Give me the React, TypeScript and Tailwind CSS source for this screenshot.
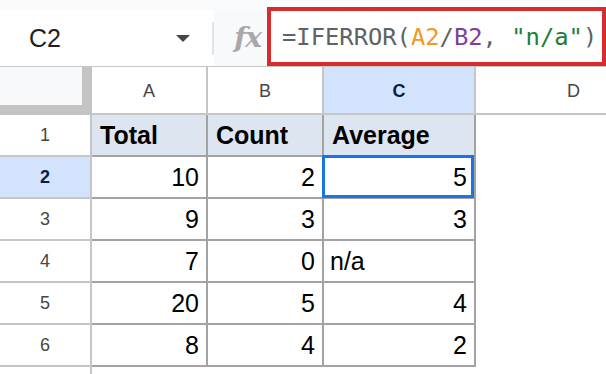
import React from "react";

const cols = ["A", "B", "C", "D"];
const widths = ["w-[116px]", "w-[116px]", "w-[152px]", "flex-1"];

const rows: { a: string; b: string; c: string; cLeft?: boolean }[] = [
  { a: "10", b: "2", c: "5" },
  { a: "9", b: "3", c: "3" },
  { a: "7", b: "0", c: "n/a", cLeft: true },
  { a: "20", b: "5", c: "4" },
  { a: "8", b: "4", c: "2" },
];

function FxIcon() {
  return (
    <span className="font-['DejaVu_Serif'] italic font-bold text-[28px] leading-none text-[#a8a8a8] tracking-[-1px]">
      fx
    </span>
  );
}

export default function App() {
  return (
    <div className="w-[606px] h-[374px] overflow-hidden bg-white font-['Liberation_Sans',Arial,sans-serif] text-black">
      <div className="h-[10px] bg-[#f9fbfd]" />
      {/* toolbar: name box + formula bar */}
      <div className="flex h-[56px]">
        <div className="w-[212px] flex items-center justify-between pl-[29px] pr-[22px]">
          <span className="text-[25px] leading-none text-[#1f1f1f]">C2</span>
          <span className="w-0 h-0 border-l-[7px] border-r-[7px] border-t-[7px] border-l-transparent border-r-transparent border-t-[#444746]" />
        </div>
        <div className="w-[2px] h-[33px] self-center bg-[#dbe4ef]" />
        <div className="w-[53px] bg-[#f8f9fa] flex items-center justify-center pl-[14px]">
          <FxIcon />
        </div>
        <div className="flex-1 relative flex items-center pl-[15px] bg-white">
          <span className="font-['DejaVu_Sans_Mono','Liberation_Mono',monospace] text-[23.8px] leading-none whitespace-pre text-[#5f6368]">
            =IFERROR(<span className="text-[#f09a26]">A2</span>/
            <span className="text-[#7b3f9e]">B2</span>,{" "}
            <span className="text-[#188038]">"n/a"</span>)
          </span>
          <div className="absolute -top-[3px] left-0 right-0 bottom-0 border-[4px] border-[#d92b2b]" />
        </div>
      </div>
      <div className="h-px bg-[#c4c7c5]" />

      {/* column headers */}
      <div className="flex h-[48px]">
        <div className="w-[92px] bg-[#f8f9fa] border-r-[10px] border-b-[10px] border-[#c4c4c4]" />
        {cols.map((c, i) => (
          <div
            key={c}
            className={`${widths[i]} flex items-center pt-[3px] text-[18px] border-b-2 border-[#c4c7c5] ${
              i < 3 ? "border-r-2 justify-center" : "justify-start pl-[91px]"
            } ${c === "C" ? "bg-[#d3e3fd] text-[#041e49] font-bold" : "text-[#444746]"}`}
          >
            {c}
          </div>
        ))}
      </div>

      {/* row 1 headers */}
      <div className="flex h-[42px]">
        <div className="w-[92px] flex items-center justify-center text-[18px] text-[#444746] border-r-2 border-b-2 border-[#c4c7c5]">
          1
        </div>
        {["Total", "Count", "Average"].map((t, i) => (
          <div
            key={t}
            className={`${widths[i]} flex items-center pl-[8px] pt-[2px] text-[25px] font-bold bg-[#dde6f0] border-r-2 border-b-2 border-[#a3a3a3]`}
          >
            {t}
          </div>
        ))}
        <div className="flex-1" />
      </div>

      {rows.map((r, idx) => {
        const n = idx + 2;
        const sel = n === 2;
        return (
          <div key={n} className="flex h-[42px]">
            <div
              className={`w-[92px] flex items-center justify-center text-[18px] border-r-2 border-b-2 border-[#c4c7c5] ${
                sel ? "bg-[#d3e3fd] text-[#041e49] font-bold" : "text-[#444746]"
              }`}
            >
              {n}
            </div>
            <div className="w-[116px] flex items-center justify-end pr-[7px] pt-[2px] text-[25px] border-r-2 border-b-2 border-[#a3a3a3]">
              {r.a}
            </div>
            <div className="w-[116px] flex items-center justify-end pr-[7px] pt-[2px] text-[25px] border-r-2 border-b-2 border-[#a3a3a3]">
              {r.b}
            </div>
            <div
              className={`relative w-[152px] flex items-center pt-[2px] text-[25px] border-r-2 border-b-2 border-[#a3a3a3] ${
                r.cLeft ? "justify-start pl-[6px]" : "justify-end pr-[7px]"
              }`}
            >
              {r.c}
              {sel && (
                <div className="absolute -top-[2px] -left-[2px] right-0 -bottom-[1px] border-[3px] border-[#1a73e8]" />
              )}
            </div>
            <div className="flex-1" />
          </div>
        );
      })}

      {/* partially visible row 7 */}
      <div className="flex h-[42px]">
        <div className="w-[92px] border-r-2 border-[#c4c7c5]" />
        <div className="flex-1" />
      </div>
    </div>
  );
}
